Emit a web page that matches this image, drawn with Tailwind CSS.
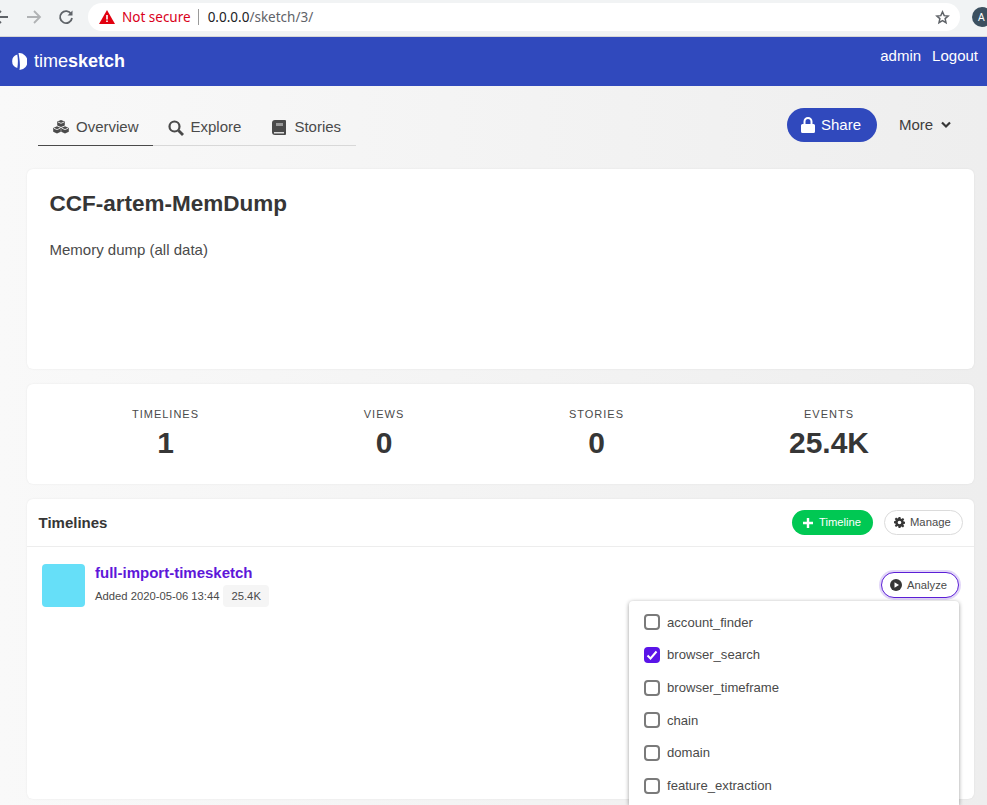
<!DOCTYPE html>
<html lang="en">
<head>
  <meta charset="UTF-8" />
  <title>timesketch</title>
  <script src="https://cdn.jsdelivr.net/npm/@tailwindcss/browser@4"></script>
</head>
<body class="h-[805px] overflow-hidden bg-gradient-to-r from-[#f9f9f9] to-[#eeeeee] font-['Liberation_Sans',sans-serif] text-[#4a4a4a]">

  <!-- Browser toolbar -->
  <div class="h-[37px] bg-[#f1f3f4] border-b border-[#d6d6d6] flex items-center relative">
    <svg class="w-4 h-4 ml-[-7px] mt-[-2px]" viewBox="0 0 16 16" fill="none" stroke="#5f6368" stroke-width="1.8"><path d="M15 8H2M8 2 2 8l6 6"/></svg>
    <svg class="w-4 h-4 ml-[17px] mt-[-2px]" viewBox="0 0 16 16" fill="none" stroke="#b0b2b4" stroke-width="1.8"><path d="M1 8h13M8 2l6 6-6 6"/></svg>
    <svg class="w-4 h-4 ml-[16px] mt-[-2px]" viewBox="0 0 16 16" fill="none" stroke="#5f6368" stroke-width="1.8"><path d="M13.200 5A6 6 0 1 0 14 9"/><path d="M14.500 1.500v5h-5z" fill="#5f6368" stroke="none"/></svg>
    <div class="ml-[14px] mt-[-2px] w-[872px] h-[28px] bg-white rounded-full flex items-center pl-[11px] pr-[10px] font-['Noto_Sans',sans-serif] text-[13.500px]">
      <svg class="w-[16px] h-[14px]" viewBox="0 0 16 14"><path d="M8 0 16 14H0z" fill="#e2000f"/><path d="M7.200 5h1.600v4.500H7.200zM7.200 10.400h1.600V12H7.200z" fill="#fff"/></svg>
      <span class="ml-[7px] text-[#d9001b]">Not secure</span>
      <span class="ml-[7px] w-px h-[16px] bg-[#9a9a9a]"></span>
      <span class="ml-[9px] text-[#202124]">0.0.0.0<span class="text-[#5f6368]">/sketch/3/</span></span>
      <svg class="w-[15px] h-[15px] ml-auto" viewBox="0 0 24 24" fill="none" stroke="#5f6368" stroke-width="2.400"><path d="M12 3l2.700 6 6.300.6-4.800 4.200 1.400 6.400L12 16.900l-5.600 3.300 1.400-6.400L3 9.600l6.300-.6z"/></svg>
    </div>
    <div class="absolute left-[972px] top-[7px] w-[20px] h-[20px] rounded-full bg-[#3c5060] text-white text-[10px] flex items-center pl-[6px]">A</div>
  </div>

  <!-- Top nav -->
  <nav class="h-[49px] bg-[#3049bd] text-white flex justify-between pl-[12px] pr-[9px]">
    <div class="flex items-center h-full text-[18px] gap-[7px]">
      <svg class="w-[15px] h-[17px]" viewBox="0 0 15 17" fill="#fff"><path d="M5.300 1.500a7 7 0 0 0 0 13.500c.8-4.500.8-9 0-13.500zM6.500 0a8.500 8.500 0 0 1 1 17c1-5.500 0-11.500-1-17z"/></svg>
      <span>time<span class="font-bold">sketch</span></span>
    </div>
    <div class="flex gap-[11px] text-[15px] pt-[8px]">
      <a>admin</a>
      <a>Logout</a>
    </div>
  </nav>

  <div class="px-[27px] pr-[13px]">
    <!-- Tabs and actions -->
    <div class="flex justify-between items-start pt-[22px] h-[83px]">
      <div class="flex ml-[11px] mt-[1px] border-b border-[#d8d8d8] h-[37px] text-[15px]">
        <a class="flex items-center gap-[7px] pl-[15px] pr-[14px] h-[37px] border-b border-[#4a4a4a] text-[#4a4a4a]">
          <svg class="w-[16px] h-[15px]" viewBox="0 0 16 15" fill="#4a4a4a"><path d="M8 0l3.800 1.500v3.900L8 7 4.200 5.400V1.500zM4 6.300l3.800 1.600v3.900L4 13.500.2 11.800V7.900zM12 6.300l3.800 1.600v3.900L12 13.500l-3.800-1.700V7.900z"/><path d="M4.900 2 8 3.300 11.100 2M1 8.300l3 1.300 3-1.300M9 8.300l3 1.300 3-1.300" fill="none" stroke="#fff" stroke-width=".8"/></svg>
          Overview
        </a>
        <a class="flex items-center gap-[7px] pl-[15px] pr-[16px] h-[37px]">
          <svg class="w-[16px] h-[16px]" viewBox="0 0 16 16" fill="none" stroke="#4a4a4a" stroke-width="2.200"><circle cx="6.500" cy="6.500" r="5"/><path d="m10.500 10.500 4.500 4.500" stroke-width="2.800"/></svg>
          Explore
        </a>
        <a class="flex items-center gap-[8px] px-[15px] h-[37px]">
          <svg class="w-[14px] h-[15px]" viewBox="0 0 14 15"><path d="M3 0h10a1 1 0 0 1 1 1v13a1 1 0 0 1-1 1H3a3 3 0 0 1-3-3V3a3 3 0 0 1 3-3z" fill="#4a4a4a"/><path d="M4 3h7v3H4z" fill="#999"/><path d="M2 12h10v1.500H2z" fill="#ddd"/></svg>
          Stories
        </a>
      </div>
      <div class="flex items-center text-[15px]">
        <button class="h-[34px] w-[90px] rounded-full bg-[#3049bd] text-white flex items-center pl-[14px] gap-[6px]">
          <svg class="w-[14px] h-[16px]" viewBox="0 0 14 16" fill="#fff"><path d="M1.500 7h11A1.500 1.500 0 0 1 14 8.500v6a1.500 1.500 0 0 1-1.500 1.500h-11A1.500 1.500 0 0 1 0 14.500v-6A1.500 1.500 0 0 1 1.500 7z"/><path d="M3.500 7.500V4.500a3.500 3.500 0 0 1 7 0v3" fill="none" stroke="#fff" stroke-width="2"/></svg>
          Share
        </button>
        <button class="h-[34px] w-[97px] flex items-center gap-[8px] pl-[22px] text-[#3d3d3d]">
          More
          <svg class="w-[10px] h-[8px]" viewBox="0 0 10 8" fill="none" stroke="#363636" stroke-width="2.200"><path d="m1 1.500 4 4 4-4"/></svg>
        </button>
      </div>
    </div>

    <!-- Sketch title -->
    <section class="h-[200px] bg-white rounded-md shadow-[0_0_2px_rgba(0,0,0,0.08)] px-[22.500px] pt-[21px]">
      <h1 class="text-[22.500px] leading-[28px] font-bold text-[#363636]">CCF-artem-MemDump</h1>
      <p class="mt-[21px] text-[15px] leading-[22px]">Memory dump (all data)</p>
    </section>

    <!-- Stats -->
    <section class="mt-[15px] h-[100px] bg-white rounded-md shadow-[0_0_2px_rgba(0,0,0,0.08)]">
      <div class="grid grid-cols-[277px_160px_265px_200px] h-full pt-[23px] text-center">
        <div>
          <p class="text-[11px] leading-[14px] tracking-[1px] uppercase">Timelines</p>
          <p class="mt-[4px] text-[30px] leading-[36px] font-bold text-[#363636]">1</p>
        </div>
        <div>
          <p class="text-[11px] leading-[14px] tracking-[1px] uppercase">Views</p>
          <p class="mt-[4px] text-[30px] leading-[36px] font-bold text-[#363636]">0</p>
        </div>
        <div>
          <p class="text-[11px] leading-[14px] tracking-[1px] uppercase">Stories</p>
          <p class="mt-[4px] text-[30px] leading-[36px] font-bold text-[#363636]">0</p>
        </div>
        <div>
          <p class="text-[11px] leading-[14px] tracking-[1px] uppercase">Events</p>
          <p class="mt-[4px] text-[30px] leading-[36px] font-bold text-[#363636]">25.4K</p>
        </div>
      </div>
    </section>

    <!-- Timelines -->
    <section class="mt-[15px] h-[300px] bg-white rounded-md shadow-[0_0_2px_rgba(0,0,0,0.08)]">
      <header class="h-[48px] border-b border-[#ededed] flex items-center justify-between pl-[11.500px] pr-[11px]">
        <h2 class="text-[15px] font-bold text-[#363636] pt-[1px]">Timelines</h2>
        <div class="flex items-center gap-[11px] text-[11.250px]">
          <button class="h-[25px] w-[81px] rounded-full bg-[#00c853] text-white flex items-center pl-[11px] gap-[6px]">
            <svg class="w-[10px] h-[10px]" viewBox="0 0 10 10" fill="#fff"><path d="M3.800 0h2.400v3.800H10v2.400H6.200V10H3.800V6.200H0V3.800h3.800z"/></svg>
            Timeline
          </button>
          <button class="h-[25px] w-[79px] rounded-full border border-[#dbdbdb] text-[#4a4a4a] flex items-center pl-[9px] gap-[5px]">
            <svg class="w-[11px] h-[11px]" viewBox="0 0 24 24" fill="#363636"><path fill-rule="evenodd" d="M10 0h4l.6 3.400 2 .8L19.500 2.300l2.800 2.800-2 2.800.8 2 3 .6v4l-3 .6-.8 2 2 2.800-2.800 2.800-2.900-1.900-2 .8L14 24h-4l-.6-3.400-2-.8-2.900 1.900-2.800-2.800 2-2.800-.8-2-3-.6v-4l3-.6.8-2-2-2.800 2.800-2.800 2.900 1.900 2-.8zM12 8a4 4 0 1 0 0 8 4 4 0 0 0 0-8z"/></svg>
            Manage
          </button>
        </div>
      </header>
      <div class="flex justify-between pl-[15px] pr-[15px] pt-[17px]">
        <div class="flex">
          <div class="w-[43px] h-[43px] rounded-[4px] bg-[#66dff8]"></div>
          <div class="ml-[10px]">
            <a class="block text-[15px] leading-[18px] font-bold text-[#5e17d9]">full-import-timesketch</a>
            <div class="mt-[3px] flex items-center text-[11.250px]">
              <span>Added 2020-05-06 13:44</span>
              <span class="ml-[4px] h-[22px] px-[8px] rounded-[4px] bg-[#f5f5f5] flex items-center">25.4K</span>
            </div>
          </div>
        </div>
        <button class="mt-[8px] h-[26px] w-[78px] rounded-full bg-white border border-[#5c1fd6] shadow-[0_0_0_2px_rgba(92,31,214,0.18)] flex items-center pl-[8px] gap-[5px] text-[11.250px]">
          <svg class="w-[12px] h-[12px]" viewBox="0 0 12 12"><circle cx="6" cy="6" r="6" fill="#363636"/><path d="M4.500 3.200 9 6l-4.500 2.800z" fill="#fff"/></svg>
          Analyze
        </button>
      </div>
    </section>
  </div>

  <!-- Analyzer dropdown -->
  <div class="absolute left-[629px] top-[601px] w-[330px] h-[204px] overflow-hidden bg-white rounded-t-[4px] shadow-[0_1px_4px_rgba(0,0,0,0.4)] pl-[15px] pt-[5px] text-[13.100px]">
    <label class="flex items-center gap-[7px] h-[32.700px]"><span class="w-[16px] h-[16px] rounded-[4px] border-2 border-[#7a7a7a]"></span>account_finder</label>
    <label class="flex items-center gap-[7px] h-[32.700px]">
      <span class="w-[16px] h-[16px] rounded-[4px] bg-[#5a14e8] flex items-center justify-center"><svg class="w-[12px] h-[12px]" viewBox="0 0 12 12" fill="none" stroke="#fff" stroke-width="2"><path d="m1.500 6.500 3 3 6-7"/></svg></span>browser_search
    </label>
    <label class="flex items-center gap-[7px] h-[32.700px]"><span class="w-[16px] h-[16px] rounded-[4px] border-2 border-[#7a7a7a]"></span>browser_timeframe</label>
    <label class="flex items-center gap-[7px] h-[32.700px]"><span class="w-[16px] h-[16px] rounded-[4px] border-2 border-[#7a7a7a]"></span>chain</label>
    <label class="flex items-center gap-[7px] h-[32.700px]"><span class="w-[16px] h-[16px] rounded-[4px] border-2 border-[#7a7a7a]"></span>domain</label>
    <label class="flex items-center gap-[7px] h-[32.700px]"><span class="w-[16px] h-[16px] rounded-[4px] border-2 border-[#7a7a7a]"></span>feature_extraction</label>
  </div>

</body>
</html>
